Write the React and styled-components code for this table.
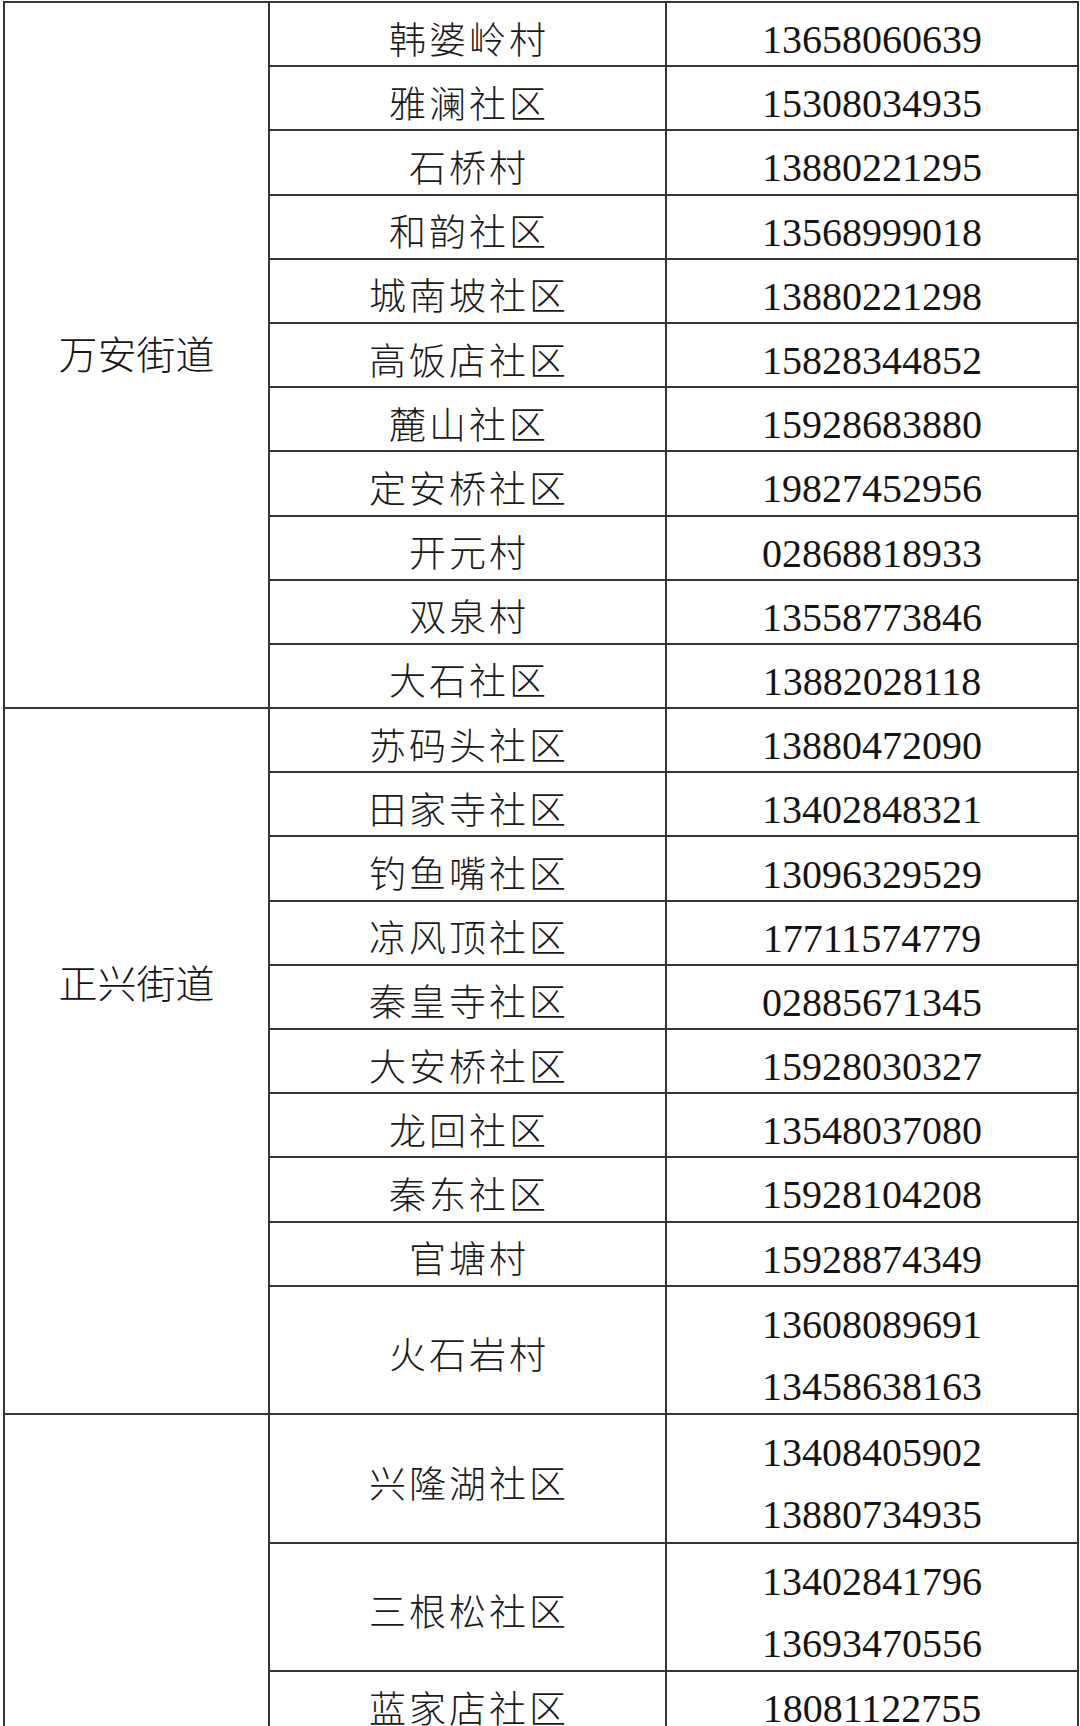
import React from "react";
import styled, { createGlobalStyle } from "styled-components";

const Global = createGlobalStyle`
  html, body {
    margin: 0;
    padding: 0;
    background: #ffffff;
  }
  body {
    font-family: "Liberation Serif", "Noto Sans CJK SC", serif;
    color: #161616;
  }
`;

const Sheet = styled.table`
  border-collapse: collapse;
  table-layout: fixed;
  width: 1074px;
  margin: 1px 0 0 3px;
  background: #fff;
`;

const Col = styled.col`
  width: ${(p) => p.$w}px;
`;

const Row = styled.tr`
  height: ${(p) => p.$units * 64.2}px;
`;

const Cell = styled.td`
  border: 2px solid #363636;
  padding: 0;
  vertical-align: middle;
  text-align: center;
`;

const StreetCell = styled(Cell)`
  font-family: "Noto Sans CJK SC", "Noto Sans CJK TC", sans-serif;
  font-weight: 300;
  font-size: 39px;
  line-height: 40px;
  color: #141414;
  padding-top: ${(p) => p.$top || 0}px;
  padding-bottom: ${(p) => p.$bottom || 0}px;
`;

const NameCell = styled(Cell)`
  font-family: "Noto Sans CJK SC", "Noto Sans CJK TC", sans-serif;
  font-weight: 300;
  font-size: 37px;
  line-height: 40px;
  letter-spacing: 3px;
  padding-top: 7px;
  padding-left: 3px;
  color: #1a1a1a;
`;

const PhoneCell = styled(Cell)`
  font-family: "Liberation Serif", "Times New Roman", serif;
  font-size: 40px;
  line-height: 40px;
  padding-top: 12px;
  color: #141414;
`;

const PhoneLine = styled.span`
  display: block;
  line-height: 40px;
  & + & {
    margin-top: 22px;
  }
`;

const groups = [
  {
    street: "万安街道",
    top: 0,
    bottom: 6,
    rows: [
      ["韩婆岭村", "13658060639"],
      ["雅澜社区", "15308034935"],
      ["石桥村", "13880221295"],
      ["和韵社区", "13568999018"],
      ["城南坡社区", "13880221298"],
      ["高饭店社区", "15828344852"],
      ["麓山社区", "15928683880"],
      ["定安桥社区", "19827452956"],
      ["开元村", "02868818933"],
      ["双泉村", "13558773846"],
      ["大石社区", "13882028118"],
    ],
  },
  {
    street: "正兴街道",
    top: 0,
    bottom: 161,
    rows: [
      ["苏码头社区", "13880472090"],
      ["田家寺社区", "13402848321"],
      ["钓鱼嘴社区", "13096329529"],
      ["凉风顶社区", "17711574779"],
      ["秦皇寺社区", "02885671345"],
      ["大安桥社区", "15928030327"],
      ["龙回社区", "13548037080"],
      ["秦东社区", "15928104208"],
      ["官塘村", "15928874349"],
      ["火石岩村", ["13608089691", "13458638163"]],
    ],
  },
  {
    street: "",
    top: 0,
    bottom: 0,
    rows: [
      ["兴隆湖社区", ["13408405902", "13880734935"]],
      ["三根松社区", ["13402841796", "13693470556"]],
      ["蓝家店社区", "18081122755"],
    ],
  },
];

export default function App() {
  return (
    <>
      <Global />
      <Sheet>
        <colgroup>
          <Col $w={265} />
          <Col $w={397} />
          <Col $w={412} />
        </colgroup>
        <tbody>
          {groups.map((g, gi) =>
            g.rows.map(([name, phone], ri) => {
              const phones = Array.isArray(phone) ? phone : [phone];
              return (
                <Row key={`${gi}-${ri}`} $units={phones.length}>
                  {ri === 0 && (
                    <StreetCell rowSpan={g.rows.length} $top={g.top} $bottom={g.bottom}>
                      {g.street}
                    </StreetCell>
                  )}
                  <NameCell>{name}</NameCell>
                  <PhoneCell>
                    {phones.map((p) => (
                      <PhoneLine key={p}>{p}</PhoneLine>
                    ))}
                  </PhoneCell>
                </Row>
              );
            })
          )}
        </tbody>
      </Sheet>
    </>
  );
}
